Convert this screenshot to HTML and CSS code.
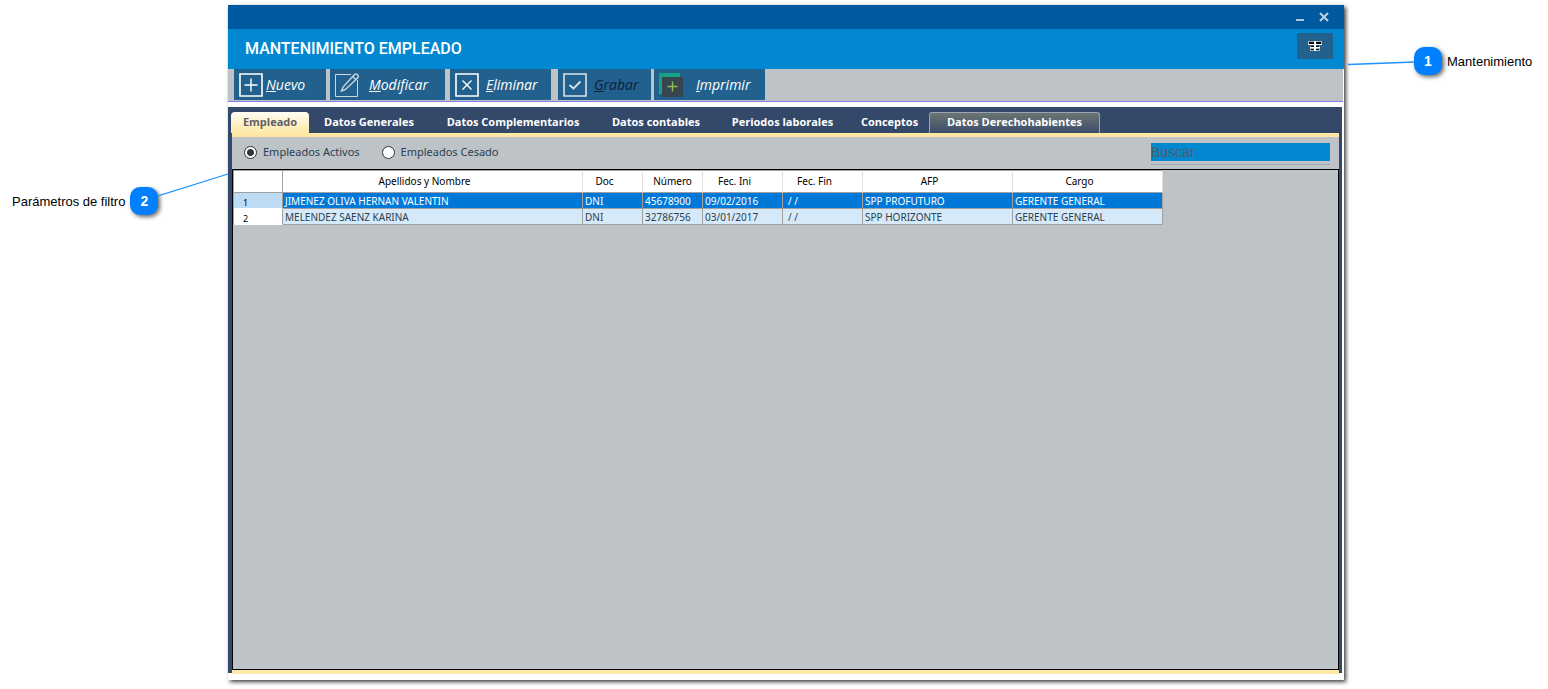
FILE: index.html
```html
<!DOCTYPE html>
<html lang="es">
<head>
<meta charset="utf-8">
<title>Mantenimiento Empleado</title>
<link rel="stylesheet" href="styles.css">
</head>
<body>
<div class="page">
  <aside class="callout callout-left">
    <span>Parámetros de filtro</span>
    <span class="badge">2</span>
    <svg class="lead lead-left" width="71" height="26" viewBox="0 0 71 26" aria-hidden="true"><path d="M0 24 L70 2" stroke="#1e90ff" stroke-width="1.2"/></svg>
  </aside>

  <main class="window">
    <div class="titlebar">
      <button class="win-btn" aria-label="Minimizar"><svg width="12" height="12" viewBox="0 0 12 12"><path d="M2 9h8" stroke="#a9c8e0" stroke-width="2"/></svg></button>
      <button class="win-btn" aria-label="Cerrar"><svg width="12" height="12" viewBox="0 0 12 12"><path d="M2 2l8 8M10 2l-8 8" stroke="#b9d2e6" stroke-width="2"/></svg></button>
    </div>
    <header class="header">
      <h1>MANTENIMIENTO EMPLEADO</h1>
      <button class="menu-btn" aria-label="Opciones">
        <svg width="14" height="10" viewBox="0 0 14 10" shape-rendering="crispEdges"><path d="M0 0h14v4H0zM2 5h10v5H2z" fill="#a9b4ba"/><path d="M1 1h12v2H1zM3 5h8v1H3zM3 8h8v1H3z" fill="#000"/><path d="M0 3h14v1H0zM2 6h10v1H2zM6 0h2v10H6z" fill="#fff"/></svg>
      </button>
    </header>

    <div class="toolbar">
      <button class="tool tool-new">
        <svg width="24" height="24" viewBox="0 0 24 24" fill="none" stroke="#fff"><path d="M1 1h22v22H1z" stroke-width="1.6"/><path d="M12 5.500v13M5.500 12h13" stroke-width="1.4"/></svg>
        <span><u>N</u>uevo</span>
      </button>
      <button class="tool tool-edit">
        <svg width="25" height="24" viewBox="0 0 25 24" fill="none" stroke="#c9d8e3"><path d="M16 1.500H.5v22h22V7"/><path d="M6.500 18L8 14 19.500 1.500q1.600-1.200 3 .2t.3 3L10.500 16.500zM17.500 3.300l3.300 3.200" stroke-width="1.4"/></svg>
        <span><u>M</u>odificar</span>
      </button>
      <button class="tool tool-delete">
        <svg width="24" height="24" viewBox="0 0 24 24" fill="none" stroke="#fff"><path d="M1 1h22v22H1z" stroke-width="1.600"/><path d="M7.500 7.500l9 9M16.500 7.500l-9 9" stroke-width="1.400"/></svg>
        <span><u>E</u>liminar</span>
      </button>
      <button class="tool tool-save" disabled>
        <svg width="24" height="24" viewBox="0 0 24 24" fill="none" stroke="#d9e4ec"><path d="M1 1h22v22H1z" stroke-width="1.600"/><path d="M6.500 12l4 3.500 7-7" stroke-width="1.800"/></svg>
        <span><u>G</u>rabar</span>
      </button>
      <button class="tool tool-print">
        <svg width="24" height="24" viewBox="0 0 24 24" fill="none"><path d="M0 0h21v21H0z" fill="#16a085"/><path d="M3 4h21v20H3z" fill="#38454f"/><path d="M13.500 8.500v10M8.500 13.500h10" stroke="#8cc152" stroke-width="1.400"/></svg>
        <span><u>I</u>mprimir</span>
      </button>
    </div>

    <section class="pages">
      <nav class="tabs">
        <button class="tab tab-active">Empleado</button>
        <button class="tab tab-w120">Datos Generales</button>
        <button class="tab tab-w168">Datos Complementarios</button>
        <button class="tab tab-w118">Datos contables</button>
        <button class="tab tab-w135">Periodos laborales</button>
        <button class="tab tab-w79">Conceptos</button>
        <button class="tab tab-hover">Datos Derechohabientes</button>
      </nav>
      <div class="panel">
        <div class="filters">
          <label><input type="radio" name="estado" checked>Empleados Activos</label>
          <label><input type="radio" name="estado">Empleados Cesado</label>
          <div class="search"><input type="text" placeholder="Buscar" aria-label="Buscar"></div>
        </div>
        <div class="grid">
          <table>
            <colgroup><col class="c-num"><col class="c-name"><col class="c-doc"><col class="c-doc"><col class="c-date"><col class="c-date"><col class="c-wide"><col class="c-wide"></colgroup>
            <thead><tr><th></th><th>Apellidos y Nombre</th><th>Doc</th><th>Número</th><th>Fec. Ini</th><th>Fec. Fin</th><th>AFP</th><th>Cargo</th></tr></thead>
            <tbody>
              <tr class="selected"><th scope="row">1</th><td>JIMENEZ OLIVA HERNAN VALENTIN</td><td>DNI</td><td>45678900</td><td>09/02/2016</td><td class="empty-date">/ /</td><td>SPP PROFUTURO</td><td>GERENTE GENERAL</td></tr>
              <tr><th scope="row">2</th><td>MELENDEZ SAENZ KARINA</td><td>DNI</td><td>32786756</td><td>03/01/2017</td><td class="empty-date">/ /</td><td>SPP HORIZONTE</td><td>GERENTE GENERAL</td></tr>
            </tbody>
          </table>
        </div>
      </div>
    </section>
  </main>

  <aside class="callout callout-right">
    <svg class="lead lead-right" width="67" height="5" viewBox="0 0 67 5" aria-hidden="true"><path d="M0 3.500L67 1" stroke="#1e90ff" stroke-width="1.300"/></svg>
    <span class="badge">1</span>
    <span>Mantenimiento</span>
  </aside>
</div>
</body>
</html>
```

FILE: styles.css
```css
* { box-sizing: border-box; }
body { margin: 0; background: #fff; font-family: "Liberation Sans", Arial, sans-serif; }
button { font: inherit; border: 0; padding: 0; }

.page { display: flex; align-items: stretch; min-height: 100vh; padding: 5px 0 9px; }

/* Numbered annotations */
.callout { position: relative; display: flex; align-items: center; align-self: flex-start; gap: 5px; height: 28px; font-size: 13px; white-space: nowrap; flex: none; }
.callout-left { width: 228px; margin-top: 182px; padding-left: 12px; }
.callout-right { width: 204px; margin-top: 42px; padding-left: 70px; }
.badge { display: flex; align-items: center; justify-content: center; width: 28px; height: 28px; border-radius: 10px; background: #0080ff; color: #fff; font-size: 14px; font-weight: bold; box-shadow: 2px 2px 4px rgba(0, 0, 0, .6); }
.lead { position: absolute; fill: none; }
.lead-left { left: 158px; top: -15px; }
.lead-right { left: 4px; top: 14px; }

/* Application window */
.window { flex: 1; min-width: 0; display: flex; flex-direction: column; background: #fff; padding-bottom: 6px; box-shadow: 2px 2px 4px rgba(0, 0, 0, .75); }
.titlebar { display: flex; justify-content: flex-end; align-items: center; gap: 12px; height: 24px; padding-right: 14px; background: #00589f; }
.win-btn { display: flex; background: none; }
.header { display: flex; justify-content: space-between; align-items: center; height: 40px; padding: 0 11px 0 17px; background: #0288d1; }
.header h1 { margin: 0; color: #fff; font: 500 16px/20px Roboto, sans-serif; }
.menu-btn { display: flex; align-items: center; justify-content: center; width: 36px; height: 26px; margin-bottom: 6px; background: #22618d; }

.toolbar { display: flex; height: 33px; padding: 0 0 1px 6px; margin-right: 1px; background: #bdc3c7; border-bottom: 1px solid #7f7fe6; }
.tool { display: flex; align-items: center; height: 31px; padding-left: 5px; background: #22618d; color: #fff; font: italic 500 14px/20px "Open Sans", "Noto Sans", sans-serif; }
.tool svg { flex: none; }
.tool-new { width: 92px; margin-right: 4px; gap: 3px; }
.tool-edit { width: 115px; margin-right: 5px; gap: 9px; }
.tool-delete { width: 101px; margin-right: 7px; gap: 7px; }
.tool-save { width: 93px; margin-right: 3px; gap: 7px; color: #0b2238; }
.tool-print { width: 111px; gap: 13px; }

.pages { flex: 1; display: flex; flex-direction: column; margin: 5px 2px 0 0; padding: 5px 3px 0 4px; background: linear-gradient(#34496a, #34496a) no-repeat 0 0 / 100% calc(100% - 1px); }
.tabs { display: flex; height: 21px; margin-left: -1px; }
.tab { padding-bottom: 2px; background: none; color: #fff; font: bold 11px/18px "Open Sans", "Noto Sans", sans-serif; white-space: nowrap; text-align: center; }
.tab-active { width: 78px; border-radius: 4px 4px 0 0; background: linear-gradient(#fffdf3, #ffe8a6); color: #5f6065; }
.tab-w120 { width: 120px; }
.tab-w168 { width: 168px; }
.tab-w118 { width: 118px; }
.tab-w135 { width: 135px; }
.tab-w79 { width: 79px; }
.tab-hover { width: 171px; border: 1px solid #98a5b8; border-bottom: 0; border-radius: 3px 3px 0 0; background: linear-gradient(#6c7472, #3b4e6b); }

.panel { flex: 1; display: flex; flex-direction: column; background: #bdc3c7; border: solid #ffe8a6; border-width: 4px 0; }
.filters { display: flex; align-items: center; height: 32px; padding: 0 9px 4px 12px; gap: 22px; color: #2c3e50; font: 11px/16px "Noto Sans", "Open Sans", sans-serif; }
.filters label { display: flex; align-items: center; gap: 6px; height: 16px; margin-top: 2px; }
.filters input[type="radio"] { appearance: none; width: 13px; height: 13px; margin: 0; border: 1px solid #333; border-radius: 50%; background: #fff; }
.filters input[type="radio"]:checked { background: radial-gradient(circle, #333 0 3px, #fff 4px); }
.search { align-self: flex-end; width: 179px; height: 22px; margin-left: auto; border-bottom: 1px solid #a2a7aa; }
.search input { display: block; width: 100%; height: 18px; padding: 0; border: 0; background: #0288d1; color: #fff; font: 14px/18px "Liberation Sans", Arial, sans-serif; }
.search input::placeholder { color: #555d63; opacity: 1; }

.grid { flex: 1; border: 1px solid #000; overflow: hidden; }
table { width: 930px; table-layout: fixed; border-collapse: separate; border-spacing: 0; border-left: 1px solid #a0a0a0; font: 10px/14px "Noto Sans", "Open Sans", sans-serif; }
.c-num { width: 49px; }
.c-name { width: 300px; }
.c-doc { width: 60px; }
.c-date { width: 80px; }
.c-wide { width: 150px; }
th, td { padding: 0 2px; font-weight: normal; white-space: nowrap; border-right: 1px solid #a0a0a0; border-bottom: 1px solid #a0a0a0; }
thead th { height: 23px; padding: 0 16px 1px 0; background: #fff; color: #000; border-top: 1px solid #a0a0a0; border-right-color: #e0e0e0; }
thead th:first-child { border-right-color: #a0a0a0; }
thead th:nth-child(4) { padding-right: 0; }
tbody td { height: 16px; padding-top: 1px; text-align: left; background: #d6e9f8; color: #2c3e50; }
tbody th { height: 16px; padding: 4px 0 0 9px; font-size: 9px; line-height: 11px; text-align: left; background: #fff; color: #000; border-bottom-color: #fff; }
.selected td { background: #0078d7; color: #fff; }
.selected th { background: #bbdcf4; }
tbody .empty-date { padding-left: 5px; }
```
